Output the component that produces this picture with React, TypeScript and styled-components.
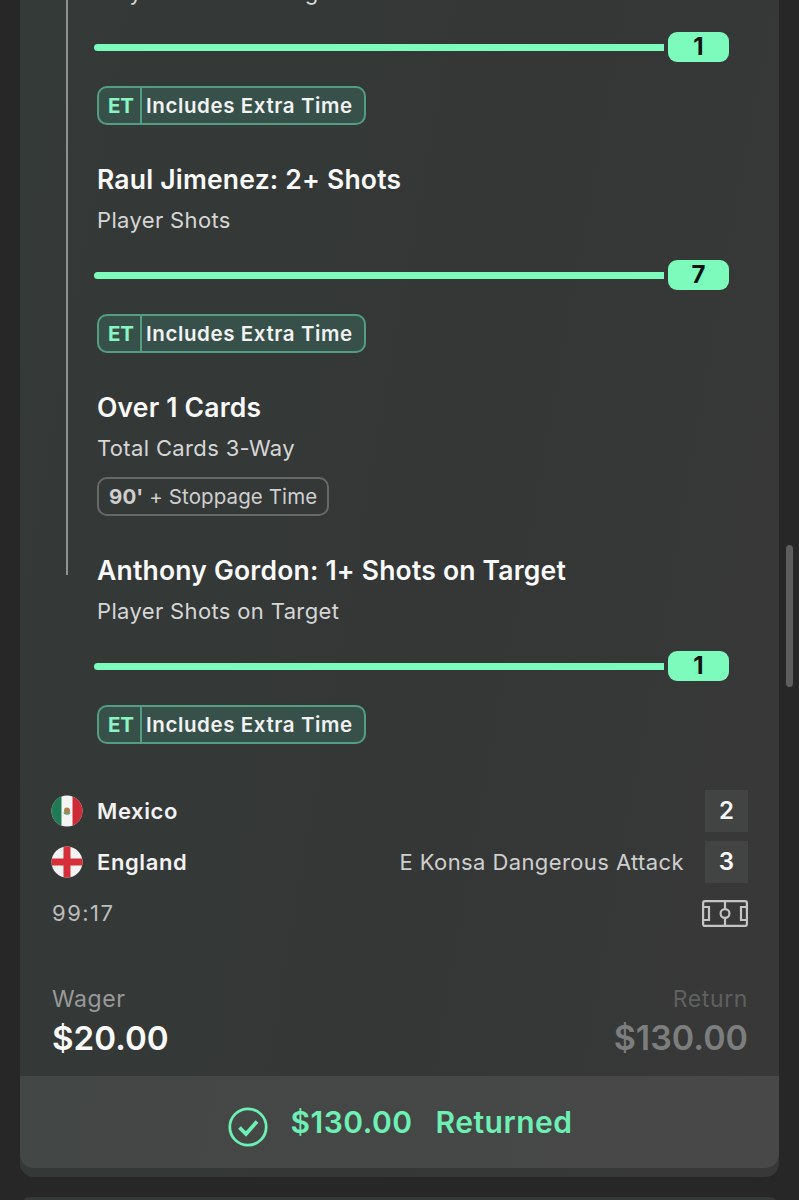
import React from 'react';
import styled, { createGlobalStyle } from 'styled-components';

const GlobalStyle = createGlobalStyle`
  html, body {
    margin: 0;
    padding: 0;
    background: #272727;
    font-family: 'Inter', 'Liberation Sans', sans-serif;
    -webkit-font-smoothing: antialiased;
  }
`;

type LegData = {
  title: string;
  market: string;
  progress?: string;
};

const legs: LegData[] = [
  { title: 'Raul Jimenez: 1+ Shots on Target', market: 'Player Shots on Target', progress: '1' },
  { title: 'Raul Jimenez: 2+ Shots', market: 'Player Shots', progress: '7' },
  { title: 'Over 1 Cards', market: 'Total Cards 3-Way' },
  { title: 'Anthony Gordon: 1+ Shots on Target', market: 'Player Shots on Target', progress: '1' },
];

const MexicoFlag = () => (
  <svg width="32" height="32" viewBox="0 0 32 32">
    <defs>
      <clipPath id="mx-clip">
        <circle cx="16" cy="16" r="15.5" />
      </clipPath>
    </defs>
    <g clipPath="url(#mx-clip)">
      <rect width="32" height="32" fill="#f4f4f4" />
      <rect width="10.5" height="32" fill="#1f7a55" />
      <rect x="21.5" width="10.5" height="32" fill="#cf2b36" />
      <circle cx="16" cy="15.5" r="3" fill="#a9834f" />
      <path d="M12.8 17.5c1.5 2.2 4.9 2.2 6.4 0" fill="none" stroke="#3f8a5e" strokeWidth="1.2" />
    </g>
  </svg>
);

const EnglandFlag = () => (
  <svg width="32" height="32" viewBox="0 0 32 32">
    <defs>
      <clipPath id="en-clip">
        <circle cx="16" cy="16" r="15.5" />
      </clipPath>
    </defs>
    <g clipPath="url(#en-clip)">
      <rect width="32" height="32" fill="#f4f4f4" />
      <rect x="12.5" width="7" height="32" fill="#d5303a" />
      <rect y="12.5" width="32" height="7" fill="#d5303a" />
    </g>
  </svg>
);

const PitchIcon = () => (
  <svg width="46" height="27" viewBox="0 0 46 27" fill="none" stroke="#c4c4c4" strokeWidth="2.2">
    <rect x="1.1" y="1.1" width="43.8" height="24.8" rx="2" />
    <path d="M23 1v25" />
    <circle cx="23" cy="13.5" r="4.4" fill="#353837" />
    <path d="M1 7h6v13H1M45 7h-6v13h6" />
  </svg>
);

const CheckIcon = () => (
  <svg width="40" height="40" viewBox="0 0 40 40" fill="none" stroke="#6ef0b4">
    <circle cx="20" cy="20" r="18.2" strokeWidth="2.8" />
    <path d="M11.5 20.5l6.5 6.5L29 14.5" strokeWidth="3.8" />
  </svg>
);

const Leg: React.FC<{ leg: LegData }> = ({ leg }) => (
  <LegBlock>
    <LegTitle>{leg.title}</LegTitle>
    <LegMarket>{leg.market}</LegMarket>
    {leg.progress ? (
      <>
        <Progress>
          <ProgressTrack />
          <ProgressValue>{leg.progress}</ProgressValue>
        </Progress>
        <ExtraTimeBadge>
          <ExtraTimeTag>ET</ExtraTimeTag>
          <ExtraTimeLabel>Includes Extra Time</ExtraTimeLabel>
        </ExtraTimeBadge>
      </>
    ) : (
      <StoppageBadge>
        <strong>90'</strong> + Stoppage Time
      </StoppageBadge>
    )}
  </LegBlock>
);

const App: React.FC = () => {
  return (
    <Page>
      <GlobalStyle />
      <Card>
        <Legs>
          {legs.map((leg) => (
            <Leg key={leg.title + leg.progress} leg={leg} />
          ))}
        </Legs>

        <Score>
          <TeamRow>
            <MexicoFlag />
            <TeamName>Mexico</TeamName>
            <ScoreBox>2</ScoreBox>
          </TeamRow>
          <TeamRow>
            <EnglandFlag />
            <TeamName>England</TeamName>
            <MatchEvent>E Konsa Dangerous Attack</MatchEvent>
            <ScoreBox>3</ScoreBox>
          </TeamRow>
          <ClockRow>
            <Clock>99:17</Clock>
            <PitchIcon />
          </ClockRow>
        </Score>

        <Totals>
          <div>
            <TotalLabel>Wager</TotalLabel>
            <TotalAmount>$20.00</TotalAmount>
          </div>
          <ReturnColumn>
            <TotalLabel $muted>Return</TotalLabel>
            <TotalAmount $muted>$130.00</TotalAmount>
          </ReturnColumn>
        </Totals>

        <Footer>
          <FooterIcon>
            <CheckIcon />
          </FooterIcon>
          <FooterAmount>$130.00</FooterAmount>
          <FooterAmount>Returned</FooterAmount>
        </Footer>
      </Card>
      <NextCard />
      <ScrollThumb />
    </Page>
  );
};

const Page = styled.div`
  position: relative;
  height: 1200px;
  overflow: hidden;
  background: #272727;
`;

const Card = styled.div`
  margin: -65px 20px 0;
  padding-bottom: 9px;
  background: linear-gradient(100deg, #343a38 0%, #343736 50%, #383838 100%);
  border-radius: 0 0 14px 14px;
`;

const Legs = styled.div`
  position: relative;
  display: flex;
  flex-direction: column;
  gap: 38px;
  padding-left: 77px;
  padding-right: 50px;

  &::before {
    content: '';
    position: absolute;
    left: 46px;
    top: 0;
    height: 640px;
    width: 2px;
    background: #8d918f;
  }
`;

const LegBlock = styled.div`
  display: flex;
  flex-direction: column;
  align-items: flex-start;
`;

const LegTitle = styled.div`
  margin-top: -1px;
  font-size: 26.5px;
  line-height: 34px;
  font-weight: 600;
  letter-spacing: 0.2px;
  color: #fafafa;
  white-space: nowrap;
`;

const LegMarket = styled.div`
  margin-top: 10px;
  font-size: 22px;
  line-height: 28px;
  letter-spacing: 0.35px;
  color: #d6d6d6;
  white-space: nowrap;
`;

const Progress = styled.div`
  display: flex;
  align-items: center;
  gap: 4px;
  align-self: stretch;
  margin: 26px 0 24px -3px;
`;

const ProgressTrack = styled.div`
  flex: 1;
  height: 7px;
  border-radius: 4px 0 0 4px;
  background: #7dfbbd;
`;

const ProgressValue = styled.div`
  width: 61px;
  height: 30px;
  border-radius: 9px;
  background: #7dfbbd;
  color: #101312;
  font-size: 24px;
  line-height: 30px;
  font-weight: 700;
  text-align: center;
`;

const ExtraTimeBadge = styled.div`
  display: flex;
  box-sizing: border-box;
  width: 269px;
  height: 39px;
  border: 2px solid #539d83;
  border-radius: 10px;
  background: #37514a;
  line-height: 35px;
  white-space: nowrap;
`;

const ExtraTimeTag = styled.span`
  width: 43px;
  padding-left: 3px;
  text-align: center;
  border-right: 2px solid #539d83;
  box-sizing: border-box;
  color: #8af5c4;
  font-size: 20.5px;
  font-weight: 700;
`;

const ExtraTimeLabel = styled.span`
  padding-left: 4px;
  color: #f2f2f2;
  font-size: 20.5px;
  font-weight: 600;
  letter-spacing: 0.6px;
`;

const StoppageBadge = styled.div`
  box-sizing: border-box;
  height: 39px;
  width: 232px;
  margin-top: 15px;
  padding-left: 10px;
  border: 2px solid #666968;
  border-radius: 10px;
  color: #cfcfcf;
  font-size: 20.5px;
  line-height: 35px;
  letter-spacing: 0.1px;
  white-space: nowrap;

  strong {
    font-weight: 700;
  }
`;

const Score = styled.div`
  display: flex;
  flex-direction: column;
  gap: 9px;
  margin-top: 46px;
  padding: 0 31px;
`;

const TeamRow = styled.div`
  display: flex;
  align-items: center;
  height: 42px;
`;

const TeamName = styled.div`
  flex: 1;
  margin-left: 14px;
  font-size: 22px;
  font-weight: 600;
  letter-spacing: 0.6px;
  color: #f2f2f2;
`;

const MatchEvent = styled.div`
  margin-right: 21px;
  font-size: 22px;
  letter-spacing: 0.4px;
  color: #cfcfcf;
  white-space: nowrap;
`;

const ScoreBox = styled.div`
  width: 43px;
  height: 42px;
  background: #424343;
  color: #fafafa;
  font-size: 24px;
  line-height: 42px;
  font-weight: 600;
  text-align: center;
`;

const ClockRow = styled.div`
  display: flex;
  align-items: center;
  justify-content: space-between;
  height: 30px;
  margin-top: 6px;
`;

const Clock = styled.div`
  margin-left: 1px;
  font-size: 22px;
  letter-spacing: 1.5px;
  color: #bdbdbd;
`;

const Totals = styled.div`
  display: flex;
  justify-content: space-between;
  margin-top: 57px;
  padding: 0 31px 0 32px;
`;

const ReturnColumn = styled.div`
  text-align: right;
`;

const TotalLabel = styled.div<{ $muted?: boolean }>`
  font-size: 23px;
  line-height: 28px;
  letter-spacing: 0.6px;
  color: ${(p) => (p.$muted ? '#5f615f' : '#9a9a9a')};
`;

const TotalAmount = styled.div<{ $muted?: boolean }>`
  margin-top: 3px;
  font-size: ${(p) => (p.$muted ? '34px' : '33.2px')};
  line-height: 44px;
  font-weight: 600;
  color: ${(p) => (p.$muted ? '#7c7e7d' : '#fafafa')};
`;

const Footer = styled.div`
  display: flex;
  align-items: center;
  justify-content: center;
  gap: 23px;
  height: 92px;
  margin-top: 16px;
  border-radius: 0 0 14px 14px;
  background: linear-gradient(100deg, #434745 0%, #484848 100%);
  padding-left: 1px;
  box-sizing: border-box;
`;

const FooterIcon = styled.div`
  display: flex;
  margin-top: 10px;
`;

const FooterAmount = styled.div`
  font-size: 30px;
  font-weight: 600;
  letter-spacing: 0.5px;
  color: #6ef0b4;
  white-space: nowrap;
`;

const NextCard = styled.div`
  height: 10px;
  margin: 20px 20px 0;
  border-radius: 14px 14px 0 0;
  background: #343a38;
`;

const ScrollThumb = styled.div`
  position: absolute;
  left: 786px;
  top: 545px;
  width: 7px;
  height: 142px;
  border-radius: 4px;
  background: #5e5e5e;
`;

export default App;
